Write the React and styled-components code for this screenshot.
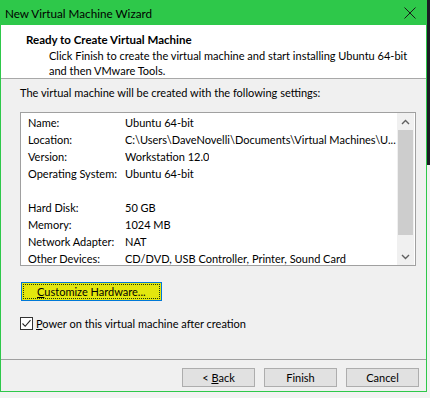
import React from 'react';
import styled, { createGlobalStyle } from 'styled-components';

const GlobalStyle = createGlobalStyle`
  html, body {
    margin: 0;
    padding: 0;
  }
  body {
    background:
      linear-gradient(#1c1c24, #1c1c24) right top / 3px 165px no-repeat,
      #f2f2f2;
    font-family: Lato, "Noto Sans", sans-serif;
    font-size: 11px;
    color: #000;
  }
`;

const settings = [
  ['Name:', 'Ubuntu 64-bit'],
  ['Location:', 'C:\\Users\\DaveNovelli\\Documents\\Virtual Machines\\U...'],
  ['Version:', 'Workstation 12.0'],
  ['Operating System:', 'Ubuntu 64-bit'],
  null,
  ['Hard Disk:', '50 GB'],
  ['Memory:', '1024 MB'],
  ['Network Adapter:', 'NAT'],
  ['Other Devices:', 'CD/DVD, USB Controller, Printer, Sound Card'],
];

const App = () => {
  return (
    <>
      <GlobalStyle />
      <Window>
        <TitleBar>
          <TitleText>New Virtual Machine Wizard</TitleText>
          <CloseIcon width="12" height="12" viewBox="0 0 12 12">
            <path d="M0.5 0.5 L11.5 11.5 M11.5 0.5 L0.5 11.5" stroke="#1a1a1a" strokeWidth="1" fill="none" />
          </CloseIcon>
        </TitleBar>
        <Header>
          <HeaderTitle>Ready to Create Virtual Machine</HeaderTitle>
          <HeaderText>
            Click Finish to create the virtual machine and start installing Ubuntu 64-bit
            <br />
            and then VMware Tools.
          </HeaderText>
        </Header>
        <Body>
          <Intro>The virtual machine will be created with the following settings:</Intro>
          <ListBox>
            <Rows>
              {settings.map((row, i) =>
                row ? (
                  <Row key={i}>
                    <Label>{row[0]}</Label>
                    <Value>{row[1]}</Value>
                  </Row>
                ) : (
                  <Row key={i} />
                )
              )}
            </Rows>
            <ScrollBar>
              <Arrow>
                <svg width="9" height="6" viewBox="0 0 9 6">
                  <path d="M1 5 L4.5 1.5 L8 5" stroke="#606060" strokeWidth="1.4" fill="none" />
                </svg>
              </Arrow>
              <Thumb />
              <Track />
              <Arrow>
                <svg width="9" height="6" viewBox="0 0 9 6">
                  <path d="M1 1 L4.5 4.5 L8 1" stroke="#606060" strokeWidth="1.4" fill="none" />
                </svg>
              </Arrow>
            </ScrollBar>
          </ListBox>
          <CustomizeButton>
            <FocusRect>
              <u>C</u>ustomize Hardware...
            </FocusRect>
          </CustomizeButton>
          <CheckRow>
            <CheckBox>
              <svg width="11" height="11" viewBox="0 0 11 11">
                <path d="M1.5 5.5 L4.2 8.3 L9.5 2.2" stroke="#222" strokeWidth="1.1" fill="none" />
              </svg>
            </CheckBox>
            <span>
              <u>P</u>ower on this virtual machine after creation
            </span>
          </CheckRow>
        </Body>
        <Footer>
          <WizardButton>
            &lt;&nbsp;<u>B</u>ack
          </WizardButton>
          <WizardButton>Finish</WizardButton>
          <WizardButton>Cancel</WizardButton>
        </Footer>
      </Window>
    </>
  );
};

const Window = styled.div`
  width: 425px;
  height: 391px;
  border: 1px solid #2ec84a;
  border-top: none;
  background: #f0f0f0;
  display: flex;
  flex-direction: column;
  box-shadow: 0 1px 0 #c8c8c8;
  white-space: nowrap;
`;

const TitleBar = styled.div`
  height: 25px;
  background: #2ec84a;
  display: flex;
  align-items: center;
  justify-content: space-between;
  padding: 0 11px 0 5px;
  margin: 0 -1px;
`;

const TitleText = styled.span`
  font-size: 11.7px;
  color: #000;
`;

const CloseIcon = styled.svg`
  display: block;
`;

const Header = styled.div`
  background: #fff;
  height: 54px;
  border-bottom: 1px solid #a8a8a8;
  padding: 7px 0 0 25px;
  box-sizing: border-box;
`;

const HeaderTitle = styled.div`
  font-weight: bold;
  font-size: 11.5px;
  line-height: 16px;
`;

const HeaderText = styled.div`
  padding-left: 23px;
  line-height: 15px;
`;

const Body = styled.div`
  flex: 1;
  padding: 6px 10px 0 19px;
  display: flex;
  flex-direction: column;
  border-bottom: 1px solid #a0a0a0;
`;

const Intro = styled.div`
  line-height: 16px;
`;

const ListBox = styled.div`
  margin-top: 11px;
  height: 154px;
  box-sizing: border-box;
  border: 1px solid #a0a0a0;
  background: #fff;
  display: flex;
`;

const Rows = styled.div`
  flex: 1;
  min-width: 0;
  padding: 1px 0 0 7px;
  overflow: hidden;
`;

const Row = styled.div`
  display: flex;
  height: 17px;
  line-height: 17px;
`;

const Label = styled.span`
  width: 97px;
  flex: none;
`;

const Value = styled.span`
  overflow: hidden;
`;

const ScrollBar = styled.div`
  width: 17px;
  flex: none;
  background: #f0f0f0;
  display: flex;
  flex-direction: column;
  margin-right: 1px;
`;

const Arrow = styled.div`
  height: 17px;
  display: flex;
  align-items: center;
  justify-content: center;
`;

const Thumb = styled.div`
  height: 105px;
  margin: 0 1px;
  background: #cdcdcd;
`;

const Track = styled.div`
  flex: 1;
`;

const CustomizeButton = styled.div`
  margin-top: 16px;
  width: 141px;
  height: 19px;
  box-sizing: border-box;
  border: 1px solid #0078d7;
  background: #e3e70e;
  padding: 1px;
  margin-left: 1px;
`;

const FocusRect = styled.div`
  height: 100%;
  box-sizing: border-box;
  border: 1px dotted #1c3a14;
  display: flex;
  align-items: center;
  padding-left: 13px;
  line-height: 13px;
`;

const CheckRow = styled.div`
  margin-top: 16px;
  display: flex;
  align-items: center;
  gap: 3px;
`;

const CheckBox = styled.div`
  width: 13px;
  height: 13px;
  box-sizing: border-box;
  border: 1px solid #333;
  background: #fff;
  display: flex;
  align-items: center;
  justify-content: center;
`;

const Footer = styled.div`
  height: 31px;
  display: flex;
  justify-content: flex-end;
  align-items: flex-start;
  gap: 9px;
  padding: 8px 7px 0 0;
  box-sizing: border-box;
`;

const WizardButton = styled.div`
  width: 73px;
  height: 19px;
  box-sizing: border-box;
  border: 1px solid #adadad;
  background: #e1e1e1;
  display: flex;
  align-items: center;
  justify-content: center;
`;

export default App;
